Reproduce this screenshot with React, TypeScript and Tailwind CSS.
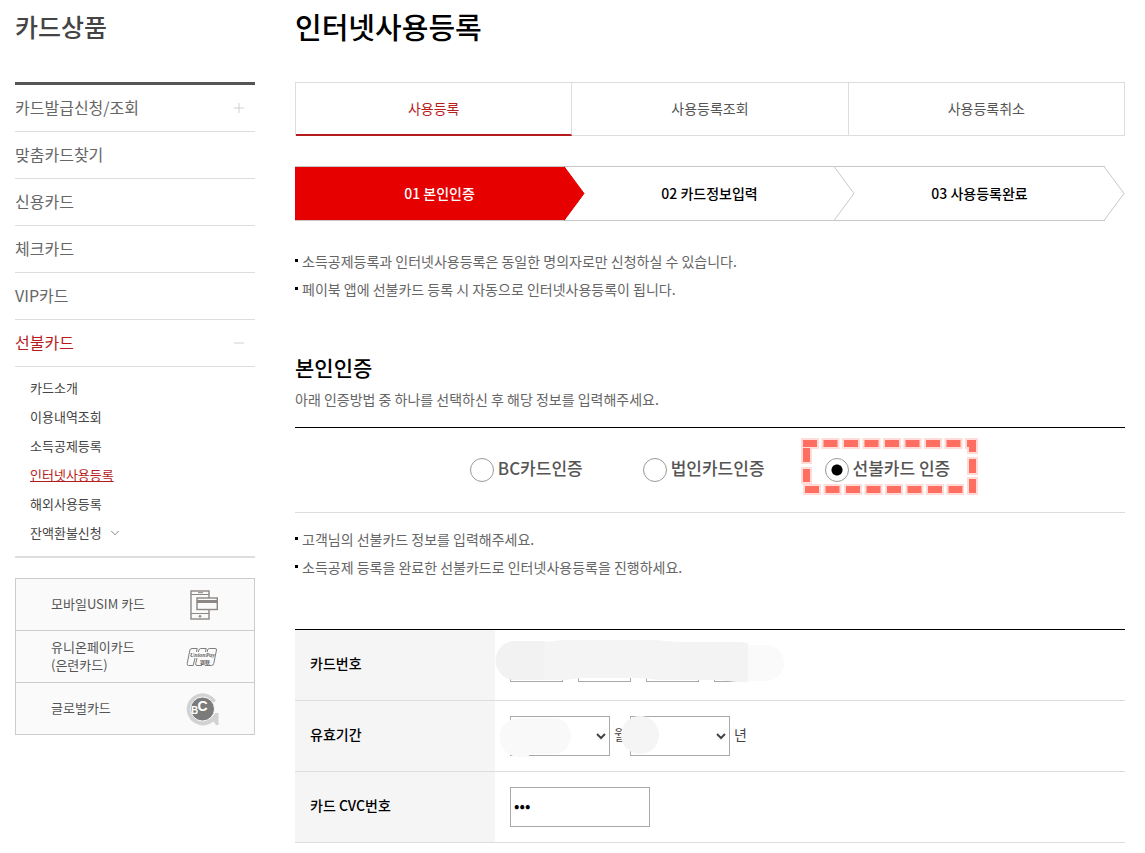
import { useState } from "react";
import { Plus, Minus, ChevronDown } from "lucide-react";

const menu = [
  { name: "카드발급신청/조회", open: false, hasSub: true },
  { name: "맞춤카드찾기" },
  { name: "신용카드" },
  { name: "체크카드" },
  { name: "VIP카드" },
  { name: "선불카드", open: true, hasSub: true },
];

const subMenu = [
  "카드소개",
  "이용내역조회",
  "소득공제등록",
  "인터넷사용등록",
  "해외사용등록",
  "잔액환불신청",
];

const tabs = ["사용등록", "사용등록조회", "사용등록취소"];
const steps = ["01 본인인증", "02 카드정보입력", "03 사용등록완료"];
const methods = ["BC카드인증", "법인카드인증", "선불카드 인증"];

function UsimIcon() {
  return (
    <svg width="32" height="30" viewBox="-4 0 32 30" fill="none" stroke="#8c8684">
      <rect x="1" y="1" width="18" height="28" strokeWidth="1.4" />
      <path d="M1 4.500h18M1 23.500h18" />
      <path d="M8 2.700h5" />
      <circle cx="10" cy="26.300" r="0.9" fill="#8c8684" />
      <rect x="7" y="8" width="20.300" height="11.500" fill="#fafafa" strokeWidth="1.4" />
      <path d="M7 11.500h20" strokeWidth="3" />
    </svg>
  );
}

function UnionPayIcon() {
  return (
    <svg width="32" height="20" viewBox="0 0 32 20" fill="none" stroke="#7d7d7d">
      <path d="M10.500 5l.7-3.500H6Q4.300 1.500 3.900 3L1.200 16.500Q.9 18.500 2.500 18.500h4.700L9 11" />
      <path d="M19.500 5l.7-3.500h-5.500q-1.400 0-1.800 1.500L12.300 5M11 11l-1.300 5.500q-.3 2 1.300 2h4.500l.3-1" />
      <path d="M21.200 5l.4-2q.4-1.500 1.800-1.500H29q1.800 0 1.500 1.500l-2.800 13.500q-.4 2-2 2H19" />
      <text x="4" y="10" fontSize="6" fontStyle="italic" fontWeight="bold" fontFamily="Liberation Serif, serif" fill="#666" stroke="none">
        UnionPay
      </text>
      <text x="14" y="17" fontSize="5" fontWeight="bold" fontFamily="Noto Sans CJK SC, sans-serif" fill="#666" stroke="none">
        银联
      </text>
    </svg>
  );
}

function GlobalIcon() {
  return (
    <svg width="34" height="34" viewBox="0 0 34 34">
      <path d="M29 10A13.500 13.500 0 1 0 26 28" fill="none" stroke="#d2d2d2" strokeWidth="5" />
      <path d="M22 28Q28 25.500 30 21h3.500V33h-2.500Q30 30.500 28 29.500l-4 2z" fill="#d2d2d2" />
      <circle cx="17.500" cy="17" r="12" fill="#7b7b7b" stroke="#fafafa" />
      <g fill="#fff" fontFamily="Liberation Sans, sans-serif" fontWeight="bold">
        <text x="6" y="22" fontSize="10">B</text>
        <text x="12.500" y="19" fontSize="14">C</text>
      </g>
    </svg>
  );
}

const banners = [
  { lines: ["모바일USIM 카드"], icon: <UsimIcon /> },
  { lines: ["유니온페이카드", "(은련카드)"], icon: <UnionPayIcon /> },
  { lines: ["글로벌카드"], icon: <GlobalIcon /> },
];

function Sidebar() {
  return (
    <aside className="w-60 shrink-0">
      <h2 className="h-[82px] pt-2 text-[25px] leading-9 font-medium text-[#444]">카드상품</h2>
      <nav className="border-t-3 border-[#555]">
        <ul>
          {menu.map((item) => (
            <li key={item.name} className="h-[47px] border-b border-[#ddd]">
              <a
                href="#"
                className={`flex h-full items-center justify-between pr-2 text-base ${
                  item.open ? "text-[#b71c1c]" : "text-[#666]"
                }`}
              >
                <span className="pb-0.5">{item.name}</span>
                {item.hasSub &&
                  (item.open ? (
                    <Minus size={16} strokeWidth={1} className="text-[#bbb]" />
                  ) : (
                    <Plus size={16} strokeWidth={1} className="text-[#bbb]" />
                  ))}
              </a>
            </li>
          ))}
        </ul>
        <ul className="border-b-2 border-[#ddd] pt-1.5 pb-[9px] pl-[15px] text-[13px] leading-[29px] text-[#444]">
          {subMenu.map((name) => (
            <li key={name} className="flex items-center gap-1.5">
              <a href="#" className={name === "인터넷사용등록" ? "text-[#b71c1c] underline" : ""}>
                {name}
              </a>
              {name === "잔액환불신청" && (
                <ChevronDown size={14} strokeWidth={1.5} className="text-[#777]" />
              )}
            </li>
          ))}
        </ul>
      </nav>
      <ul className="mt-5 border border-b-0 border-[#ccc] bg-[#fafafa]">
        {banners.map((b) => (
          <li key={b.lines[0]} className="border-b border-[#ccc]">
            <a href="#" className="flex h-[51px] items-center pl-[35px] text-[13px] leading-[18px] text-[#555]">
              <span className="flex-1 pb-0.5">
                {b.lines.map((line) => (
                  <span key={line} className="block">
                    {line}
                  </span>
                ))}
              </span>
              <span className="mr-8 flex w-10 justify-center">{b.icon}</span>
            </a>
          </li>
        ))}
      </ul>
    </aside>
  );
}

function Notes({ items }: { items: string[] }) {
  return (
    <ul className="text-sm leading-7 text-[#666]">
      {items.map((text) => (
        <li key={text} className="flex gap-1">
          <span className="mt-3 size-[3px] shrink-0 bg-black" />
          {text}
        </li>
      ))}
    </ul>
  );
}

function Steps() {
  return (
    <ol className="mt-[30px] flex pr-5 text-sm font-medium">
      {steps.map((step, i) => (
        <li
          key={step}
          className={`flex h-[55px] flex-1 items-center border-y border-[#c8c8c8] ${
            i === 0 ? "bg-[#e60000] text-white" : "text-black"
          }`}
        >
          <span className="flex-1 pb-0.5 pl-5 text-center">{step}</span>
          <svg width="21" height="55" viewBox="0 0 21 55" className="relative -mr-5 shrink-0">
            <path
              d="M0 .5L20 27.500L0 54.500"
              fill={i === 0 ? "#e60000" : "#fff"}
              stroke={i === 0 ? "#e60000" : "#c8c8c8"}
            />
          </svg>
        </li>
      ))}
    </ol>
  );
}

function Marker() {
  return (
    <svg
      width="184"
      height="66"
      viewBox="0 0 184 66"
      fill="none"
      className="pointer-events-none absolute -top-5 -left-[27px]"
    >
      {[
        { color: "#ffdcd8", width: 11, pad: 2 },
        { color: "#ff6f61", width: 7, pad: 0 },
      ].map(({ color, width, pad }) => (
        <g key={color} stroke={color} strokeWidth={width}>
          <path d={`M${5 - pad} 7.500H178`} strokeDasharray={`${14 + pad * 2} ${6.5 - pad * 2}`} />
          <path d={`M${7 - pad} 53.500H166`} strokeDasharray={`${14 + pad * 2} ${6.5 - pad * 2}`} />
          <path d={`M8.500 ${12 - pad}V${26 + pad}M8.500 ${33 - pad}V${46 + pad}`} />
          <path d={`M174.500 ${4 - pad}V${16 + pad}M174.500 ${23 - pad}V${37 + pad}M174.500 ${43 - pad}V${57 + pad}`} />
        </g>
      ))}
    </svg>
  );
}

const thClass = "w-[200px] bg-[#f5f5f5] pl-[15px] pb-1 text-left font-medium text-black";
const fieldClass = "border border-[#a9a9a9] bg-white text-sm text-[#444] outline-none";

export default function App() {
  const [tab, setTab] = useState(tabs[0]);
  const [method, setMethod] = useState(methods[2]);
  const [cvc, setCvc] = useState("000");

  return (
    <div className="flex gap-10 bg-white pr-5 pb-2 pl-[15px] font-['Noto_Sans_CJK_KR',sans-serif]">
      <Sidebar />
      <main className="min-w-0 flex-1">
        <h1 className="h-[82px] pt-1.5 text-[29px] leading-10 font-medium text-black">인터넷사용등록</h1>

        <div className="grid h-[54px] grid-cols-3 border-l border-[#ddd] text-sm text-[#555]">
          {tabs.map((name) => (
            <button
              key={name}
              type="button"
              onClick={() => setTab(name)}
              className={`border-t border-r border-t-[#ddd] border-r-[#ddd] ${
                tab === name
                  ? "border-b-2 border-b-[#b71c1c] pb-px text-[#b71c1c]"
                  : "border-b border-b-[#ddd] pb-0.5"
              }`}
            >
              {name}
            </button>
          ))}
        </div>

        <Steps />

        <div className="mt-[26px]">
          <Notes
            items={[
              "소득공제등록과 인터넷사용등록은 동일한 명의자로만 신청하실 수 있습니다.",
              "페이북 앱에 선불카드 등록 시 자동으로 인터넷사용등록이 됩니다.",
            ]}
          />
        </div>

        <h2 className="mt-12 text-[21px] leading-8 font-medium text-black">본인인증</h2>
        <p className="pt-1 pb-4 text-sm leading-6 text-[#666]">
          아래 인증방법 중 하나를 선택하신 후 해당 정보를 입력해주세요.
        </p>

        <div className="flex h-[86px] items-center justify-center gap-[60px] border-t border-b border-t-black border-b-[#ddd]">
          {methods.map((name, i) => (
            <label
              key={name}
              className="relative flex items-center gap-1 text-[17px] leading-6 font-medium text-[#555]"
            >
              <input
                type="radio"
                name="method"
                checked={method === name}
                onChange={() => setMethod(name)}
                className="size-6 appearance-none rounded-full border border-[#999] bg-white checked:bg-[radial-gradient(circle,#000_5px,#fff_6px)]"
              />
              <span className="pb-1">{name}</span>
              {i === 2 && <Marker />}
            </label>
          ))}
        </div>

        <div className="mt-3">
          <Notes
            items={[
              "고객님의 선불카드 정보를 입력해주세요.",
              "소득공제 등록을 완료한 선불카드로 인터넷사용등록을 진행하세요.",
            ]}
          />
        </div>

        <table className="mt-12 w-full border-t border-black text-sm">
          <tbody>
            <tr className="h-[71px] border-b border-[#ddd]">
              <th scope="row" className={thClass}>
                카드번호
              </th>
              <td className="relative pl-[15px]">
                <div className="flex gap-[15px]">
                  {[1, 2, 3, 4].map((n) => (
                    <input
                      key={n}
                      type="text"
                      aria-label={`카드번호 ${n}`}
                      className={`${fieldClass} h-[34px] w-[53px]`}
                    />
                  ))}
                </div>
                <svg width="300" height="70" className="pointer-events-none absolute top-0 left-0">
                  <path d="M241 14h40v40h-40z" fill="#fff" />
                  <path d="M245 15h26a18 18 0 0 1 0 36h-26z" fill="#fafafa" />
                  <path d="M50 11H20a19.500 19.500 0 0 0 0 39h30z" fill="#f2f2f2" />
                  <path d="M49 12l18-2h93l22 2h3v38h-20l-20-2H88l-20 2H49z" fill="#f4f4f4" />
                  <path d="M185 12h60l8 1v39h-12l-16-2h-40z" fill="#f3f3f3" />
                </svg>
              </td>
            </tr>
            <tr className="h-[71px] border-b border-[#ddd]">
              <th scope="row" className={thClass}>
                유효기간
              </th>
              <td className="relative pl-[15px]">
                <div className="flex items-center gap-1 text-[#444]">
                  <select id="month" aria-label="월" className={`${fieldClass} h-10 w-[100px]`}>
                    <option></option>
                  </select>
                  <label htmlFor="month" className="w-3 pb-1">
                    월
                  </label>
                  <select id="year" aria-label="년" className={`${fieldClass} h-10 w-[100px]`}>
                    <option></option>
                  </select>
                  <label htmlFor="year" className="pb-1">
                    년
                  </label>
                </div>
                <svg width="300" height="70" className="pointer-events-none absolute top-0 left-0">
                  <path d="M24 17h34a18 18 0 0 1 0 36h-24v3H24a19.500 19.500 0 0 1 0-39z" fill="#f9f9f9" />
                  <path d="M133 40h5v10h-5z" fill="#fff" />
                  <circle cx="145" cy="34" r="19" fill="#f5f5f5" />
                </svg>
              </td>
            </tr>
            <tr className="h-[71px] border-b border-[#ddd]">
              <th scope="row" className={thClass}>
                <label htmlFor="cvc">카드 CVC번호</label>
              </th>
              <td className="pl-[15px]">
                <input
                  id="cvc"
                  type="password"
                  value={cvc}
                  maxLength={3}
                  onChange={(e) => setCvc(e.target.value)}
                  className="block h-10 w-[140px] border border-[#a9a9a9] bg-white pb-1 pl-[3px] text-base text-black outline-none"
                />
              </td>
            </tr>
          </tbody>
        </table>
      </main>
    </div>
  );
}
